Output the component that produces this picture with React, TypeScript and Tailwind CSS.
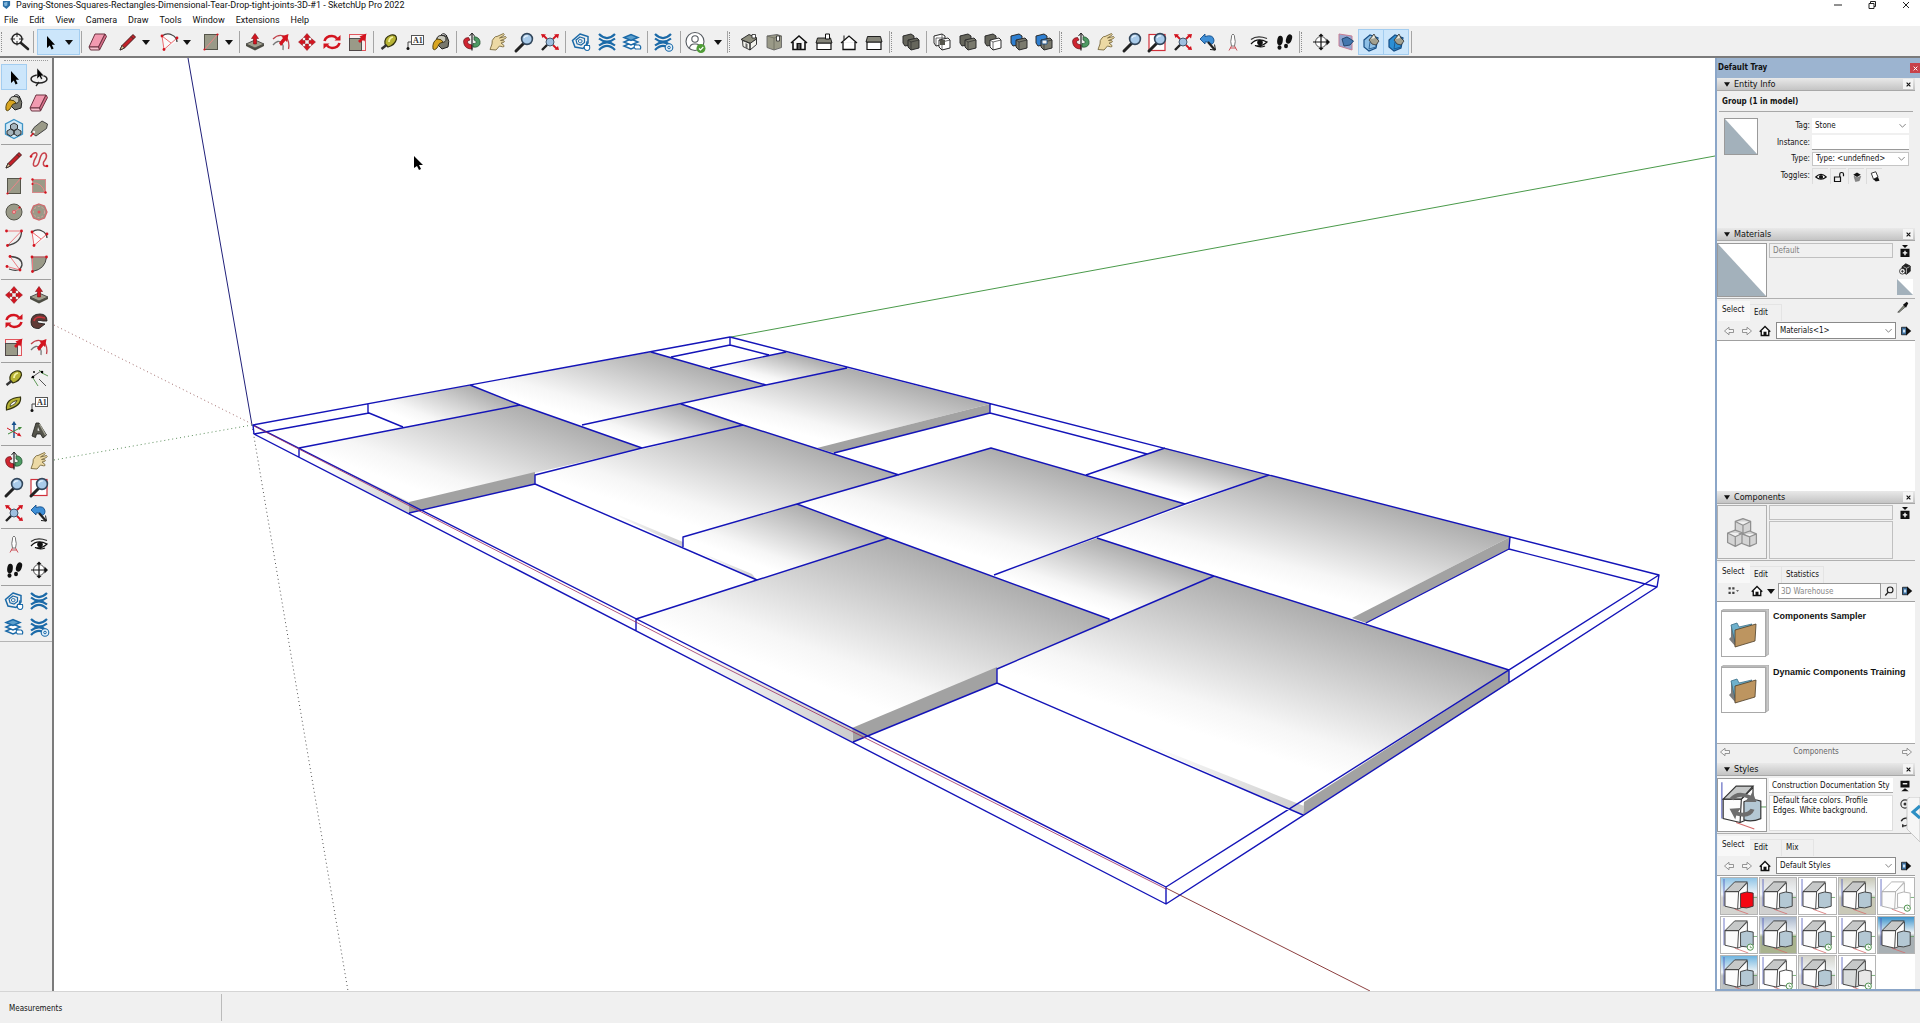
import type { ReactNode } from "react"
import clsx from "clsx"

const RED = "#d3141f"
const STONE = "#9a9a88"
const BLUE = "#1b6aa8"

const lens = (
    <>
        <path d="M11.5 13.5 L4 21" stroke="#222" strokeWidth="3" strokeLinecap="round" />
        <circle cx="15" cy="9" r="5.4" fill="#a9cbea" stroke="#33475c" strokeWidth="1.6" />
        <path d="M12 8 Q13 5.500 16 6" stroke="#e6f2fb" strokeWidth="1.2" fill="none" />
    </>
)

const wave = (
    <g stroke={BLUE} strokeWidth="2.2" fill="none">
        <path d="M4 4 Q12 12 20 4" />
        <path d="M4 8.500 Q12 15 20 8.500" />
        <path d="M4 15.500 Q12 9 20 15.500" />
        <path d="M4 20 Q12 12 20 20" />
    </g>
)

const pair = (back: string, front: string, stroke = "#2b2b2b") => (
    <g stroke={stroke} strokeWidth="1">
        <path d="M4 6 L12 4 L15 6 V14 L6 16 L4 13 Z" fill={back} />
        <path d="M9 10 L18 8 L20 10 V18 L12 20 L9 17 Z" fill={front} />
        <path d="M9 10 L12 12 V20 M12 12 L20 10" fill="none" strokeWidth="0.7" />
    </g>
)

const cutBox = (side: string) => (
    <>
        <path d="M5 10 L11 5 L19 8 L17 18 L10 21 L5 17 Z" fill={side} stroke="#174f86" strokeWidth="1.2" />
        <path d="M11 12 L17 9 L17 17 L10 19 Z" fill={side} stroke="#174f86" strokeWidth="0.8" />
        <path d="M10 10 L15 4 L17 8 L20 11 L17 15 L13 14 Z" fill="#a3a190" stroke="#333" strokeWidth="0.8" />
        <path d="M12 9 L15 5 L16 8 Z" fill="#ecebe0" />
    </>
)

const icons: Record<string, ReactNode> = {
    search: (
        <>
            <circle cx="9" cy="9" r="5" fill="#f4f4f4" stroke="#222" strokeWidth="1.4" />
            <path d="M9 2.500 V7 M9 11 V15.500 M2.500 9 H7 M11 9 H15.500" stroke="#222" />
            <path d="M13 13 L20 19" stroke="#222" strokeWidth="2.600" strokeLinecap="round" />
        </>
    ),
    select: <path d="M9 6 V18 L11.800 15.500 L13.600 19.500 L15.600 18.500 L13.800 14.700 H17 Z" fill="#000" />,
    lasso: (
        <>
            <ellipse cx="12" cy="14" rx="8" ry="4" fill="none" stroke="#222" strokeWidth="1.500" />
            <path d="M12 17 L9 21" stroke="#222" strokeWidth="1.300" />
            <path d="M10 3 V14 L12.500 11.500 L14 14.500 L15.500 13.800 L14.300 10.800 H17 Z" fill="#000" stroke="#eee" strokeWidth="0.500" />
        </>
    ),
    eraser: (
        <g stroke="#6b3240" strokeWidth="1" strokeLinejoin="round">
            <path d="M9 4 L19 4 L12.500 17 L3 17 Z" fill="#f29ab0" />
            <path d="M19 4 L20.500 6.500 L13.500 20 L12.500 17 Z" fill="#d86f8a" />
            <path d="M3 17 L12.500 17 L13.500 20 L4.500 20 Z" fill="#f7c0cd" />
        </g>
    ),
    pencil: (
        <>
            <path d="M4 20 L6 15.500 L17 4.500 L19.500 7 L8.500 18 Z" fill="#c22028" stroke="#3a1212" strokeWidth="0.900" />
            <path d="M4 20 L6 15.500 L8.500 18 Z" fill="#e9c99b" stroke="#222" strokeWidth="0.800" />
            <path d="M15 6.500 L17.500 9" stroke="#333" />
        </>
    ),
    freehand: (
        <>
            <path d="M4 8 C7 3 12 4 9 9 C6 14 5 19 9 18 C13 17 12 9 15 6 C19 3 21 8 18 12 C15 15 16 19 20 18" fill="none" stroke="#c8414a" strokeWidth="1.500" />
            <circle cx="4" cy="8.500" r="1.300" fill={RED} />
            <circle cx="20" cy="18" r="1.300" fill={RED} />
        </>
    ),
    rect: (
        <>
            <rect x="5.500" y="4.500" width="13" height="15" fill={STONE} stroke="#55554a" />
            <path d="M5 20 L19 4" stroke="#ec8487" strokeWidth="1" />
            <circle cx="5.500" cy="19.500" r="1.100" fill={RED} />
            <circle cx="18.500" cy="4.500" r="1.100" fill={RED} />
        </>
    ),
    rotrect: (
        <>
            <rect x="5.500" y="5.500" width="13" height="13" fill={STONE} stroke="#d9888a" />
            <path d="M5 9 Q15 8 18 19" stroke="#ec8487" fill="none" />
            <circle cx="5.500" cy="5.500" r="1.200" fill={RED} />
            <circle cx="5.500" cy="10" r="1.100" fill={RED} />
            <circle cx="18.500" cy="18.500" r="1.200" fill={RED} />
        </>
    ),
    circle: (
        <>
            <circle cx="12" cy="12" r="8" fill={STONE} stroke="#55554a" />
            <path d="M12 12 L18 8" stroke="#ec8487" />
            <circle cx="12" cy="12" r="1.700" fill="#f2a2a2" stroke="#d9585e" strokeWidth="0.800" />
            <circle cx="17.500" cy="7.500" r="1.100" fill={RED} />
        </>
    ),
    polygon: (
        <>
            <path d="M12 4 L17.500 6 L20 12 L17.500 18 L12 20 L6.500 18 L4 12 L6.500 6 Z" fill={STONE} stroke="#d0676b" strokeWidth="1.300" />
            <circle cx="12" cy="12" r="5.500" fill="none" stroke="#e2a0a0" strokeDasharray="2 2" />
            <circle cx="12" cy="12" r="1.500" fill="#e0555c" />
        </>
    ),
    arc: (
        <>
            <path d="M5 6 Q10 2 15 4.500 Q20 7 20 12 Q17 13 7 19.500 Z" fill="#fafafa" />
            <path d="M5 6 Q10 2.500 15 5 Q19.500 7 20 12" fill="none" stroke="#444" strokeWidth="1.300" />
            <path d="M5 6 L7 19.500 L20 8 M5 6 L14 13" stroke="#ec6a6f" fill="none" />
            <circle cx="5" cy="6" r="1.400" fill={RED} />
            <circle cx="20" cy="8" r="1.400" fill={RED} />
            <circle cx="7" cy="19.500" r="1.400" fill={RED} />
        </>
    ),
    arc2: (
        <>
            <path d="M4.500 5 H19.500 L5.500 19.500" stroke="#ec7a7f" fill="none" />
            <path d="M19.500 5 Q19.500 17 5.500 19.500" stroke="#444" strokeWidth="1.300" fill="none" />
            <circle cx="4.500" cy="5" r="1.400" fill={RED} />
            <circle cx="19.500" cy="5" r="1.400" fill={RED} />
            <circle cx="5.500" cy="19.500" r="1.400" fill={RED} />
        </>
    ),
    arc3: (
        <>
            <path d="M8 4.500 Q20 5 20 13 Q18 21 7 17" stroke="#444" strokeWidth="1.300" fill="none" />
            <path d="M8 4.500 L18 18 L5 14.500" stroke="#ec7a7f" fill="none" />
            <circle cx="8" cy="4.500" r="1.400" fill={RED} />
            <circle cx="18" cy="18" r="1.400" fill={RED} />
            <circle cx="5" cy="14.500" r="1.400" fill={RED} />
        </>
    ),
    pie: (
        <>
            <path d="M5 5 H19.500 Q18.500 17 5.500 19.500 Z" fill={STONE} stroke="#444" />
            <path d="M5 5 H19.500 M5.500 19.500 V5" stroke="#ec7a7f" />
            <circle cx="5" cy="5" r="1.400" fill={RED} />
            <circle cx="19.500" cy="5" r="1.400" fill={RED} />
            <circle cx="5.500" cy="19.500" r="1.400" fill={RED} />
        </>
    ),
    pushpull: (
        <>
            <path d="M3 14 L12 10 L21 14 L12 18 Z" fill="#a09f8d" stroke="#333" strokeWidth="0.800" />
            <path d="M3 14 V16 L12 20.500 L21 16 V14 L12 18 Z" fill="#4c4c42" />
            <path d="M12 3.500 L15.500 8.500 H13.500 V14 H10.500 V8.500 H8.500 Z" fill={RED} stroke="#7d0d14" strokeWidth="0.600" />
        </>
    ),
    offset: (
        <>
            <path d="M4 9 Q10 3 17 7 Q21 12 19.500 19" stroke="#c04048" strokeWidth="1.300" fill="none" />
            <path d="M4 15 Q9 9 13 13 Q15 16 14 20" stroke="#777" strokeWidth="1.300" fill="none" />
            <path d="M10 13 L14 8 L12.500 6.500 L19.500 4 L18 12 L16.500 10.500 L12 16 Z" fill={RED} />
        </>
    ),
    move: (
        <g fill={RED} stroke="#8c0f16" strokeWidth="0.500">
            <path d="M12 3.500 L15.500 7.500 H13.500 V10 H10.500 V7.500 H8.500 Z" />
            <path d="M12 20.500 L15.500 16.500 H13.500 V14 H10.500 V16.500 H8.500 Z" />
            <path d="M3.500 12 L7.500 8.500 V10.500 H10 V13.500 H7.500 V15.500 Z" />
            <path d="M20.500 12 L16.500 8.500 V10.500 H14 V13.500 H16.500 V15.500 Z" />
        </g>
    ),
    rotate: (
        <g fill="none" stroke={RED} strokeWidth="2.600">
            <path d="M4.500 11 Q6 6 12 6 Q15 6 17 8.500" />
            <path d="M19.500 13 Q18 18 12 18 Q9 18 7 15.500" />
            <path d="M14.500 10.500 H20.500 V5 Z M9.500 13.500 H3.500 V19 Z" fill={RED} stroke="none" />
        </g>
    ),
    followme: (
        <>
            <path d="M4 13 Q4 5 13 5 Q20 5 20 12 L16 12 Q9 10 11 14 L18 15 L12 19.500 Q4 20 4 13 Z" fill="#5f3a35" stroke="#222" strokeWidth="0.900" />
            <path d="M7 12 Q8 8 13 8 L18 9" stroke="#c8323a" strokeWidth="1.600" fill="none" />
        </>
    ),
    scale: (
        <>
            <rect x="3.500" y="4.500" width="16" height="16" fill="#f7eeee" stroke="#e0555c" />
            <rect x="3.500" y="8.500" width="12" height="12" fill={STONE} stroke="#444" strokeWidth="0.900" />
            <path d="M12 11 L15 8 L13.500 6.500 L20.500 3.500 L18.500 11.500 L17 10 L14 13 Z" fill={RED} />
        </>
    ),
    tape: (
        <>
            <path d="M8 14 Q7 7 14 5 Q19.500 4 19.500 9 Q18 15 11 17 Z" fill="#b7b335" stroke="#33330f" strokeWidth="1.200" />
            <path d="M12 12 Q12 8 16 7" stroke="#f4f2a2" strokeWidth="1.800" fill="none" />
            <path d="M9.500 15 L4.500 19" stroke="#333" strokeWidth="2.400" />
        </>
    ),
    dimension: (
        <>
            <path d="M4 12 L14 5 M12 13 L19 20" stroke="#555" strokeWidth="1" />
            <path d="M12 4 L16 8 M15 7 L21 10 M6 12 L11 20" stroke="#5f9a58" strokeWidth="1" />
            <circle cx="6" cy="11" r="1.300" />
            <circle cx="15" cy="6" r="1.300" />
            <path d="M6 5 h2 v2 h-2 z" fill="#444" />
        </>
    ),
    protractor: (
        <>
            <path d="M4.500 18 Q3 6 18.500 5 Q20 14 4.500 18 Z" fill="#b7b335" stroke="#33330f" strokeWidth="1.200" />
            <path d="M8 14.500 Q8 10 15 8.500 Q14 12.500 8 14.500 Z" fill="#f1f1f1" stroke="#33330f" strokeWidth="0.800" />
        </>
    ),
    label: (
        <>
            <rect x="8.500" y="5.500" width="12" height="9" fill="#fff" stroke="#555" />
            <text x="10" y="13" fontSize="8" fontFamily="Liberation Serif, serif" fontWeight="700" fill="#333">A1</text>
            <path d="M8 12 H5 V18" stroke="#444" fill="none" />
            <circle cx="5" cy="18.500" r="1.500" fill="#111" />
        </>
    ),
    axes: (
        <>
            <path d="M12 5 V20" stroke="#16508c" strokeWidth="1.400" />
            <path d="M5 10 L17 17" stroke={RED} strokeWidth="1" />
            <path d="M18 10 L6 16" stroke="#3f8a3a" strokeWidth="1" />
            <path d="M9.500 7 L12 3 L14.500 7 Z" fill="#16508c" />
            <path d="M19.500 18.500 L15 17.500 L17 14.500 Z" fill={RED} />
            <path d="M20 9 L16 9 L17.500 12 Z" fill="#3f8a3a" />
        </>
    ),
    text3d: (
        <>
            <path d="M5 18 L9 5 H12 L19.500 17 L16 20 L13.500 16 H9.500 L8.500 19.500 Z" fill="#55554c" stroke="#1d1d1a" strokeWidth="0.800" />
            <path d="M10.500 12.500 L11 9 L12.500 13 Z" fill="#f0f0f0" />
            <path d="M12.500 6 L18.500 17" stroke="#a5a596" strokeWidth="1.300" />
        </>
    ),
    paint: (
        <>
            <path d="M8 8 Q12 4 18 6.500 Q21 11 19 17 L13 19 L8 14 Z" fill="#77776c" stroke="#222" />
            <ellipse cx="12.500" cy="9" rx="4.500" ry="3.500" fill="#c9c9bd" stroke="#222" strokeWidth="0.900" />
            <path d="M4 19 Q3 12 8 9 Q13 9 14 12 Q10 12 8 18 Q5.500 21 4 19 Z" fill="#d9a520" stroke="#4b3b0a" strokeWidth="0.900" />
            <path d="M12 5 Q15 2 18 6" stroke="#222" fill="none" />
        </>
    ),
    component: (
        <>
            <path d="M12 2.500 L20.500 7 V17 L12 21.500 L3.500 17 V7 Z" fill="#d4e9f6" stroke="#3e94c6" strokeWidth="1.300" />
            <path d="M12 6 L15.500 8 V11.500 L12 13.500 L8.500 11.500 V8 Z M8.500 12 L12 14 V17 L8.500 19 L5 17 V14 Z M15.500 12 L19 14 V17 L15.500 19 L12 17 V14 Z" fill="#a5b4bc" stroke="#222" strokeWidth="0.900" />
        </>
    ),
    tag: (
        <>
            <path d="M4 15.500 L7 10.500 L15 4 L20.500 7 L19.500 11.500 L9 19 Z" fill={STONE} stroke="#444" />
            <circle cx="7" cy="15" r="1.200" fill="#f0f0f0" />
            <path d="M6.500 16 L3.500 19.500" stroke={RED} strokeWidth="1.400" />
        </>
    ),
    orbit: (
        <>
            <path d="M4 14 Q2 8 8.500 7.500 L10 10 Q6 11 8.500 14 L12 15 V19 Q5.500 19 4 14 Z" fill="#cf2530" stroke="#641015" strokeWidth="0.700" />
            <path d="M14 6.500 Q21 7.500 20 14 Q18 18 13 17 V13.500 Q17 14 16 11 L14 10 Z" fill="#4d9a63" stroke="#1c4a2a" strokeWidth="0.700" />
            <path d="M12 3.500 V20.500" stroke="#222" strokeWidth="1.200" />
            <path d="M9.500 6 L12 3 L14.500 6" fill="none" stroke="#222" />
        </>
    ),
    hand: (
        <path
            d="M4 19.500 L6 14 Q5.500 10 8 8 Q9.500 6 11 6.500 L17.500 3.500 Q19 4 17.500 5.500 L13.500 8 L19.500 6.500 Q21 7.200 19.500 8.500 L14.500 10.500 L18 10.800 Q19 12 17.500 12.500 L15 13 L18 15.500 Q18.500 17.200 16.500 16.800 L13.500 16 L10 20 Z"
            fill="#ecd9a4"
            stroke="#7b6b40"
            strokeWidth="0.900"
        />
    ),
    zoom: lens,
    zoomwin: (
        <>
            <rect x="4" y="4.500" width="16" height="16" fill="#fff" stroke="#d0303a" strokeWidth="1.200" />
            {lens}
        </>
    ),
    extents: (
        <>
            <path d="M10 14 L4 20" stroke="#222" strokeWidth="2.400" />
            <path d="M5 5 L9 9 M19 5 L15 9 M19 19 L15 15" stroke={RED} strokeWidth="1.800" />
            <path d="M3 4 L8 4.500 L4.500 8 Z M21 4 L20 8.500 L16 4.500 Z M21 20 L16.500 19.500 L20 16 Z" fill={RED} />
            <circle cx="12" cy="12" r="4" fill="#9fc0e0" stroke="#44566a" />
        </>
    ),
    prev: (
        <>
            <path d="M4 9 L9 4 V6.500 Q17 4 18 10 Q18 15 13.500 14 Q14 11.500 9 12 V14 Z" fill="#3f8fd6" stroke="#16508c" strokeWidth="0.900" />
            <path d="M12 12 L19 20" stroke="#222" strokeWidth="2.200" />
            <path d="M14 19.500 L19.500 20 L18.500 14.500" stroke="#222" fill="none" />
        </>
    ),
    position: (
        <>
            <path d="M12 4 Q14 5 13.600 8 Q15 11 13.500 16 H10.500 Q9 11 10.400 8 Q10 5 12 4 Z" fill="#fff" stroke="#777" />
            <path d="M10.500 16 L8 20.500 M13.500 16 L16 20.500 M9 18 H15" stroke="#cc525a" fill="none" />
        </>
    ),
    eye: (
        <>
            <path d="M4 14 Q10 7 20 12 Q15 17 8 15.500 Q13 18 18 16" fill="#fff" stroke="#111" strokeWidth="1.200" />
            <circle cx="13" cy="12.500" r="2.800" fill="#111" />
            <path d="M4 9.500 Q10 5 20 8.500" stroke="#333" strokeWidth="1.300" fill="none" />
        </>
    ),
    feet: (
        <g fill="#111">
            <ellipse cx="8" cy="10.500" rx="2.800" ry="4.800" transform="rotate(8 8 10.500)" />
            <ellipse cx="7.500" cy="17.500" rx="2" ry="2.300" />
            <ellipse cx="17" cy="9" rx="2.800" ry="4.800" transform="rotate(20 17 9)" />
            <ellipse cx="14" cy="16" rx="2" ry="2.300" />
        </g>
    ),
    section: (
        <>
            <circle cx="12" cy="12" r="5.500" fill="#fff" stroke="#555" strokeWidth="1" />
            <path d="M4 12 H20 M12 5 V19" stroke="#111" strokeWidth="1.200" />
            <path d="M17.500 8.500 L21 12 L17.500 15.500 Z M9.500 6 L12 3.500 L14.500 6 Z M9.500 18 L12 20.500 L14.500 18 Z" fill="#111" />
        </>
    ),
    warehouse: (
        <>
            <path d="M11 4 L19 6.500 V13 L14 18.500 L6 17 L3.500 10.500 Z" fill="none" stroke={BLUE} strokeWidth="1.500" />
            <path d="M11 7 L15.500 8.500 V12.500 L12 15 L8 13.800 L7 10 Z" fill="none" stroke={BLUE} strokeWidth="1.200" />
            <path d="M11 9.500 L13 10.200 V12 L11 13 L9.500 12 V10.200 Z" fill="none" stroke={BLUE} strokeWidth="0.900" />
            <path d="M18 11 V15.500 H20.500 Q21.500 20.500 18 20.500 Q14.500 20 15.500 15.500 L17 15.500 Z" fill="#fff" stroke={BLUE} strokeWidth="1.100" />
        </>
    ),
    ext: wave,
    layers: (
        <>
            <g fill="#fff" stroke={BLUE} strokeWidth="1.500">
                <path d="M4 16 L11 19 L18 16 L11 13 Z" />
                <path d="M4 12 L11 15 L18 12 L11 9 Z" />
                <path d="M4 7.500 L11 10.500 L18 7.500 L11 4.500 Z" fill="#5d9fcc" />
            </g>
            <path d="M15 15 H19 Q21.500 16 20.500 19 H15.500 Q13 17 15 15 Z" fill="#fff" stroke={BLUE} strokeWidth="1.100" />
        </>
    ),
    extmgr: (
        <>
            {wave}
            <circle cx="18" cy="17.500" r="3.800" fill="#e3f0fa" stroke={BLUE} strokeWidth="1.100" />
            <circle cx="18" cy="17.500" r="1.300" fill="none" stroke={BLUE} />
        </>
    ),
    account: (
        <>
            <circle cx="11" cy="11.500" r="9" fill="#fff" stroke="#555a60" strokeWidth="1.100" />
            <circle cx="11" cy="9" r="3.200" fill="none" stroke="#555a60" strokeWidth="1.100" />
            <path d="M5.500 18 Q6.500 13.500 11 14 Q15.500 13.500 16.500 18" fill="none" stroke="#555a60" strokeWidth="1.100" />
            <circle cx="17" cy="18.500" r="4.500" fill="#4f9c37" />
            <path d="M15 18.500 L16.500 20 L19.300 17" stroke="#fff" strokeWidth="1.100" fill="none" />
        </>
    ),
    iso: (
        <>
            <path d="M4 9.500 L12 4.500 L20 8 L14 13.500 Z" fill="#8f8f7f" stroke="#222" strokeWidth="0.900" />
            <path d="M5.500 10.500 L13 13.500 L13 20 L6 16.500 Z M13 13.500 L19.500 9 V14.500 L13 20 Z" fill="#f4f4ee" stroke="#222" strokeWidth="0.900" />
            <path d="M8.500 13 V17.500 L10.500 18.500 V14 Z" fill="#666" />
            <path d="M15 4.500 H18.500 V8 H15 Z" fill="#fff" stroke="#222" strokeWidth="0.800" />
        </>
    ),
    topview: (
        <>
            <path d="M5 6 L15 4.500 L19.500 6 V17.500 L12 20 L5 17.500 Z" fill={STONE} stroke="#666" strokeWidth="0.900" />
            <path d="M12 8 V20 M5 6 L12 8 L19.500 6" stroke="#6b6b5e" strokeWidth="0.800" fill="none" />
            <path d="M14.500 6 H17.500 V11 H14.500 Z" fill="#fff" stroke="#333" strokeWidth="0.900" />
        </>
    ),
    front: (
        <>
            <path d="M4 13 L12 6 L20 13 M6 12 V19.500 H18 V12" fill="#f8f8f8" stroke="#111" strokeWidth="1.600" />
            <path d="M9.500 13 H14.500 V19.500 H9.500 Z" fill="#111" />
            <path d="M12 14 V19" stroke="#999" />
        </>
    ),
    rightview: (
        <>
            <path d="M5 13 H19 V19.500 H5 Z" fill="#fff" stroke="#111" strokeWidth="1.200" />
            <path d="M5.500 8 H18.500 L20 13 H4 Z" fill="#85857a" stroke="#111" strokeWidth="0.900" />
            <path d="M13.500 4 H17.500 V9 H13.500 Z" fill="#fff" stroke="#111" strokeWidth="1" />
        </>
    ),
    back: (
        <>
            <path d="M4 13 L12 6 L20 13 M6 12 V19.500 H18 V12" fill="#fff" stroke="#111" strokeWidth="1.300" />
            <path d="M7 5.500 V10" stroke="#111" />
        </>
    ),
    leftview: (
        <>
            <path d="M5 12 H19 V19.500 H5 Z" fill="#fff" stroke="#111" strokeWidth="1.200" />
            <path d="M5.500 6.500 H18.500 L20 12 H4 Z" fill="#85857a" stroke="#111" strokeWidth="0.900" />
        </>
    ),
    outer: pair("#66665c", "#66665c"),
    intersect: (
        <>
            {pair("#fff", "#fff")}
            <path d="M10 10 H15 V15 H10 Z" fill="#55554c" />
            <path d="M6 8 H15 M6 8 V16 M12 4 V10" stroke="#333" strokeWidth="0.700" />
        </>
    ),
    union: pair("#66665c", "#7a7a6e"),
    subtract: pair("#66665c", "#fff"),
    trim: pair("#2f7fd0", "#7a7a6e"),
    split: (
        <>
            {pair("#2f7fd0", "#7a7a6e")}
            <path d="M10 10 H15 V14 H10 Z" fill="#f2f2f2" stroke="#16508c" strokeWidth="0.900" />
        </>
    ),
    plane: (
        <>
            <path d="M5 4 L18 6 V20 L5 16 Z" fill="#93a6d0" stroke="#c87d93" />
            <path d="M8 9 L13 7 L19.500 11 L16 15 L10 16 Z" fill="#4477ae" stroke="#24476f" />
        </>
    ),
    cut: cutBox("#8dbfe6"),
    fill: cutBox("#2c8fd4"),
}

const viewIcon: Record<string, ReactNode> = {
    back: <path d="M2 8 L8 3 V6 H14 V10 H8 V13 Z" fill="#f6f6f6" stroke="#777" />,
    forward: <path d="M14 8 L8 3 V6 H2 V10 H8 V13 Z" fill="#f6f6f6" stroke="#777" />,
    home: (
        <>
            <path d="M1 9 L8 2 L15 9 M3 8 V14 H13 V8" fill="#fff" stroke="#111" strokeWidth="1.800" />
            <path d="M6 9 H10 V14 H6 Z" fill="#111" />
        </>
    ),
    details: (
        <>
            <path d="M2 3 H9 V13 H2 Z" fill="#3c6e9c" stroke="#111" />
            <path d="M8 2 L15 8 L8 14 Z" fill="#111" />
            <path d="M4 6 H7 V10 H4 Z" fill="#cfe2f2" />
        </>
    ),
    pane: (
        <>
            <path d="M4 0 H12 L8 4 Z M2 5 H14 V16 H2 Z" fill="#111" />
            <path d="M8 7.500 V13.500 M5 10.500 H11" stroke="#fff" strokeWidth="1.800" />
        </>
    ),
    paneUp: (
        <>
            <path d="M2 1 H14 V10 H2 Z M8 11 L13 15 H3 Z" fill="#111" />
            <path d="M5 5 H11" stroke="#fff" strokeWidth="1.800" />
        </>
    ),
    create: (
        <>
            <path d="M4 5 L9 1 L15 4 V11 L10 15 L4 12 Z" fill="#222" stroke="#111" />
            <path d="M6 5 L10 7 L14 5 M10 7 V14" stroke="#ccc" fill="none" />
            <circle cx="4.500" cy="11" r="3.800" fill="#fff" stroke="#111" />
            <path d="M4.500 9 V13 M2.500 11 H6.500" stroke="#111" />
        </>
    ),
    dropper: (
        <>
            <path d="M1 15 L9 6 L11 8 L3 15 Z" fill="#8a8f80" stroke="#333" strokeWidth="0.800" />
            <path d="M8 5 L12 9 L15 3 L13 1 Z" fill="#111" />
        </>
    ),
    grid: <path d="M2 3 h3 v3 h-3 z M7 3 h3 v3 h-3 z M2 9 h3 v3 h-3 z M7 9 h3 v3 h-3 z M12 7 h4 l-2 2 z" fill="#444" />,
    eye: (
        <>
            <path d="M1 8 Q8 1 15 8 Q8 14 1 8 Z" fill="#fff" stroke="#111" strokeWidth="1.500" />
            <circle cx="8" cy="8" r="2.800" fill="#111" />
        </>
    ),
    lock: <path d="M2 8 H10 V14 H2 Z M9 8 V4 Q9 2 11.500 2 Q14 2 14 4 V7" fill="none" stroke="#111" strokeWidth="1.600" />,
    shadow: (
        <>
            <path d="M3 5 L8 2 L13 5 L8 8 Z" fill="#111" />
            <path d="M4 7 L8 9 L13 7 L11 13 L6 14 Z" fill="#8a8a8a" stroke="#555" strokeWidth="0.600" />
        </>
    ),
    cast: (
        <>
            <path d="M3 3 L9 1 L12 8 L6 11 Z" fill="#fff" stroke="#222" strokeWidth="1.200" />
            <path d="M6 11 L12 8 L14 13 L9 14 Z" fill="#111" />
        </>
    ),
    find: (
        <>
            <circle cx="9.500" cy="6.500" r="3.800" fill="none" stroke="#222" strokeWidth="1.500" />
            <path d="M7 9.500 L3 14" stroke="#222" strokeWidth="1.800" />
        </>
    ),
    target: (
        <>
            <circle cx="8" cy="8" r="5.500" fill="none" stroke="#333" strokeWidth="1.500" />
            <circle cx="8" cy="8" r="2" fill="#333" />
        </>
    ),
    refresh: <path d="M3 7 Q5 2 11 3 M11 1 V5 M13 9 Q11 14 5 13 M5 11 V15" fill="none" stroke="#222" strokeWidth="1.800" />,
}

function Tool({ name, active }: { name: string; active?: boolean }) {
    return (
        <button
            type="button"
            aria-label={name}
            className={clsx(
                "flex h-6 w-6 shrink-0 items-center justify-center",
                active && "bg-[#cce6fb] outline outline-[#a3cdf0]"
            )}
        >
            <svg viewBox="0 0 24 24" className="h-6 w-6">{icons[name]}</svg>
        </button>
    )
}

function Small({ name, className }: { name: string; className?: string }) {
    return (
        <button type="button" aria-label={name} className={clsx("flex h-4 w-4 shrink-0 items-center justify-center", className)}>
            <svg viewBox="0 0 16 16" className="h-3 w-3">{viewIcon[name]}</svg>
        </button>
    )
}

function Caret() {
    return (
        <button type="button" aria-label="More tools" className="flex h-6 w-3 shrink-0 items-center justify-center">
            <svg viewBox="0 0 10 6" className="h-[5px] w-[8px]"><path d="M0 0 H10 L5 6 Z" fill="#111" /></svg>
        </button>
    )
}

function Grip() {
    return <div className="my-1 ml-px mr-1 w-px shrink-0 border-l border-dotted border-[#8f8f8f]" />
}

type Segment = { width: string; tools: string[]; grip?: boolean }

const segments: Segment[] = [
    { width: "w-[134px]", tools: ["pushpull", "offset", "move", "rotate", "scale"] },
    { width: "w-[83px]", tools: ["tape", "label", "paint"] },
    { width: "w-[109px]", tools: ["orbit", "hand", "zoom", "extents"] },
    { width: "w-[82px]", tools: ["warehouse", "ext", "layers"] },
    { width: "w-[33px]", tools: ["extmgr"] },
    { width: "w-[47px]", tools: ["account", "caret"] },
    { width: "w-[156px]", tools: ["iso", "topview", "front", "rightview", "back", "leftview"], grip: true },
    { width: "w-[31px]", tools: ["outer"], grip: true },
    { width: "w-[133px]", tools: ["intersect", "union", "subtract", "trim", "split"] },
    { width: "w-[234px]", tools: ["orbit", "hand", "zoom", "zoomwin", "extents", "prev", "position", "eye", "feet"], grip: true },
    { width: "w-[106px]", tools: ["section", "plane", "cut", "fill"], grip: true },
]

function Toolbar() {
    return (
        <div className="flex h-[32px] shrink-0 items-stretch overflow-hidden border-b-2 border-[#7b7b7b] bg-[#f0f0f0] pt-[2px]">
            <Grip />
            <div className="my-[3px] flex w-[28px] shrink-0 items-center justify-center border-r border-[#a5a5a5]"><Tool name="search" /></div>
            <div className="my-[3px] flex w-[48px] shrink-0 items-center border-r border-[#a5a5a5] pl-1">
                <div className="flex w-[41px] items-center justify-between bg-[#cce6fb] pr-1 outline outline-[#a3cdf0]">
                    <Tool name="select" />
                    <Caret />
                </div>
            </div>
            <div className="my-[3px] flex w-[158px] shrink-0 items-center justify-between border-r border-[#a5a5a5] pl-1 pr-1">
                <Tool name="eraser" />
                <div className="flex items-center"><Tool name="pencil" /><Caret /></div>
                <div className="flex items-center"><Tool name="arc" /><Caret /></div>
                <div className="flex items-center"><Tool name="rect" /><Caret /></div>
            </div>
            {segments.map((segment, i) => (
                <div key={i} className="flex shrink-0">
                    {segment.grip && <Grip />}
                    <div className={clsx("my-[3px] flex shrink-0 items-center justify-between border-r border-[#a5a5a5] px-[3px]", segment.width)}>
                        {segment.tools.map((tool) =>
                            tool === "caret" ? <Caret key={tool} /> : <Tool key={tool} name={tool} active={tool === "cut" || tool === "fill"} />
                        )}
                    </div>
                </div>
            ))}
        </div>
    )
}

const palette = [
    ["select", "lasso", "paint", "eraser", "component", "tag"],
    ["pencil", "freehand", "rect", "rotrect", "circle", "polygon", "arc2", "arc", "arc3", "pie"],
    ["move", "pushpull", "rotate", "followme", "scale", "offset"],
    ["tape", "dimension", "protractor", "label", "axes", "text3d"],
    ["orbit", "hand", "zoom", "zoomwin", "extents", "prev"],
    ["position", "eye", "feet", "section"],
    ["warehouse", "ext", "layers", "extmgr"],
]

function Palette() {
    return (
        <aside className="w-[54px] shrink-0 border-r-2 border-[#7b7b7b] bg-[#f0f0f0]">
            <div className="mx-1 mt-[2px] mb-1 border-t border-dotted border-[#9a9a9a]" />
            <div className="border-b border-[#b5b5b5] pb-[2px]">
                {palette.map((group, i) => (
                    <div key={i} className={clsx("mx-px", i > 0 && "mt-[3px] border-t border-[#a0a0a0] pt-[3px]")}>
                        <div className="grid w-[50px] grid-cols-2 gap-y-[2px] justify-items-center">
                            {group.map((tool) => <Tool key={tool} name={tool} active={tool === "select"} />)}
                        </div>
                    </div>
                ))}
            </div>
        </aside>
    )
}

type Pt = [number, number]

// corners of every paver face: left, far, right, near
const stones: Pt[][] = [
    [[368, 404], [470, 385], [520, 405], [403, 427]],
    [[470, 385], [651, 352], [766, 385], [582, 425]],
    [[710, 368], [786, 352], [847, 368], [766, 385]],
    [[299, 448], [520, 405], [642, 448], [409, 502]],
    [[582, 425], [681, 404], [743, 425], [642, 448]],
    [[681, 404], [847, 368], [990, 404], [817, 448]],
    [[535, 475], [743, 425], [899, 475], [683, 537]],
    [[1086, 475], [1165, 448], [1269, 475], [1185, 504]],
    [[797, 504], [991, 448], [1185, 504], [994, 575]],
    [[683, 537], [797, 504], [888, 538], [757, 580]],
    [[1097, 538], [1269, 475], [1510, 537], [1352, 618]],
    [[994, 575], [1097, 538], [1214, 576], [1109, 621]],
    [[636, 619], [888, 538], [1109, 619], [1109, 621], [997, 669], [852, 728]],
    [[997, 669], [1215, 576], [1509, 670], [1304, 802]],
]

const sides = [
    "409,502 535,472 535,484 409,513",
    "817,448 990,404 990,413 834,453",
    "1352,618 1510,537 1509,549 1366,623",
    "852,728 997,667 997,683 853,742",
    "1304,802 1509,670 1509,683 1303,815",
]

const edges = [
    "M253 425 L730 337 L1659 575 L1166 887 Z",
    "M253 425 L254 434 L1166 904 L1657 587 L1659 575 M1166 887 V904",
    "M254 434 L369 413 L403 427 M368 404 V413",
    "M299 448 L520 405 M299 448 V457",
    "M470 385 L520 405 L642 448 L535 475 V484 L409 513",
    "M651 352 L766 385 L582 425",
    "M671 357 L730 345 L769 355 M730 337 V345",
    "M710 368 L786 352 M766 385 L847 368",
    "M681 404 L743 425 L899 475",
    "M642 448 L743 425",
    "M990 404 V413 L834 453 M990 413 L1147 454",
    "M535 484 L757 580 M683 547 V537 L797 504 L991 448 L1185 504",
    "M1086 475 L1165 448 M1269 475 L1185 504 L994 575",
    "M797 504 L888 538 L1109 619 V621",
    "M636 631 V619 L757 580 L888 538",
    "M1097 538 L1214 576 L1109 621 L997 669 V683 L1303 815",
    "M1214 576 L1509 670 V683",
    "M1510 537 L1509 549 L1366 623 M1509 549 L1657 587",
    "M997 683 L853 742",
]

function foot([l, t, r]: Pt[]): Pt {
    // foot of the perpendicular from the left corner on the far edge
    const dx = r[0] - t[0]
    const dy = r[1] - t[1]
    const k = ((l[0] - t[0]) * dx + (l[1] - t[1]) * dy) / (dx * dx + dy * dy)
    return [t[0] + k * dx, t[1] + k * dy]
}

function Viewport() {
    return (
        <main className="min-w-0 flex-1 bg-white">
            <svg viewBox="54 58 1661 933" preserveAspectRatio="xMinYMin slice" className="h-full w-full" role="img" aria-label="Paving stones model">
                <defs>
                    {stones.map((s, i) => {
                        const end = foot(s)
                        return (
                            <linearGradient key={i} id={`stone${i}`} gradientUnits="userSpaceOnUse" x1={s[0][0]} y1={s[0][1]} x2={end[0]} y2={end[1]}>
                                <stop offset="0" stopColor="#fff" />
                                <stop offset="0.200" stopColor="#f6f6f6" />
                                <stop offset="1" stopColor="#adadad" />
                            </linearGradient>
                        )
                    })}
                    <linearGradient id="lip" x1="0" y1="0" x2="1" y2="0">
                        <stop offset="0.200" stopColor="#fff" />
                        <stop offset="1" stopColor="#cdcdcd" />
                    </linearGradient>
                </defs>

                {/* Axes */}
                <path d="M188 58 L252 425" stroke="#20207a" fill="none" />
                <path d="M731 337 L1715 156" stroke="#4a9a4a" fill="none" />
                <path d="M1166 888 L1370 991" stroke="#8c4040" fill="none" />
                <path d="M252 425 L348 991" stroke="#555" strokeDasharray="1 3" fill="none" />
                <path d="M54 325 L252 424" stroke="#a06a6a" strokeDasharray="1 3" fill="none" />
                <path d="M54 460 L252 425" stroke="#5d8f5d" strokeDasharray="1 3" fill="none" />

                {/* Stones */}
                {stones.map((s, i) => <polygon key={i} points={s.join(" ")} fill={`url(#stone${i})`} />)}
                {sides.map((p) => <polygon key={p} points={p} fill="#a2a2a2" />)}
                <polygon points="299,448 409,502 409,513 300,457" fill="url(#lip)" />
                <polygon points="636,619 852,728 853,742 636,631" fill="url(#lip)" />
                <polygon points="590,503 683,542 683,547" fill="url(#lip)" />
                <polygon points="683,545 752,574 757,580" fill="url(#lip)" />
                <polygon points="1110,729 1304,806 1303,815" fill="url(#lip)" />

                <path d={edges.join(" ")} fill="none" stroke="#1414b8" strokeWidth="1.400" strokeLinejoin="round" />
                <path d="M254 426 L700 655 L1166 889" stroke="#9c2a5c" strokeWidth="0.800" fill="none" />

                {/* Pointer */}
                <path d="M414 156 V168 L417 166 L419 170 L421 169 L419 165 H423 Z" fill="#000" />
            </svg>
        </main>
    )
}

function Header({ title }: { title: string }) {
    return (
        <div className="flex h-[13px] shrink-0 items-center justify-between border-b border-[#a8a8a8] bg-linear-to-b from-[#e9e9e9] to-[#c4c4c4] pl-[7px] text-[9px] leading-[12px]">
            <h2 className="flex items-center gap-1">
                <svg viewBox="0 0 8 6" className="h-[5px] w-[6px]"><path d="M0 0 H8 L4 6 Z" fill="#111" /></svg>
                {title}
            </h2>
            <button type="button" aria-label={`Close ${title}`} className="mr-[2px] flex h-[10px] w-[10px] items-center justify-center bg-[#f4f4f4]">
                <svg viewBox="0 0 8 8" className="h-[5px] w-[5px]"><path d="M1 1 L7 7 M7 1 L1 7" stroke="#111" strokeWidth="1.800" /></svg>
            </button>
        </div>
    )
}

function Pick({ label, value, className }: { label: string; value: string; className?: string }) {
    return (
        <div className={clsx("relative bg-white", className)}>
            <select aria-label={label} className="h-full w-full appearance-none bg-transparent pl-[3px] pr-3 outline-none">
                <option>{value}</option>
            </select>
            <svg viewBox="0 0 8 5" className="pointer-events-none absolute right-[3px] top-1/2 h-[4px] w-[7px] -translate-y-1/2">
                <path d="M0 0 L4 4 L8 0" fill="none" stroke="#666" />
            </svg>
        </div>
    )
}

function Tabs({ names }: { names: string[] }) {
    return (
        <div className="flex h-[22px] items-end pl-px">
            {names.map((name, i) => (
                <button
                    key={name}
                    type="button"
                    className={clsx("px-1 text-left", i === 0 ? "h-[20px] w-[32px] bg-[#f8f8f8] pb-[2px]" : "h-[17px] min-w-[32px] border-r border-t border-[#e4e4e4]")}
                >
                    {name}
                </button>
            ))}
        </div>
    )
}

function Swatch({ className }: { className?: string }) {
    return (
        <svg viewBox="0 0 10 10" preserveAspectRatio="none" className={clsx("shrink-0", className)}>
            <path d="M0 0 H10 V10 Z" fill="#fff" />
            <path d="M0 0 V10 H10 Z" fill="#a3b1bb" />
        </svg>
    )
}

type Look = { sky?: string; ground?: string; body?: string; drum?: string; sketch?: boolean; badge?: boolean }

const looks: Look[] = [
    { sky: "#8fc4e6", ground: "#d4d4d0", drum: "#f40612" },
    { sky: "#d9d9d9", ground: "#d0d0d0" },
    {},
    { sky: "#c9c9b8", ground: "#c9c9b8" },
    { drum: "#fff", sketch: true, badge: true },
    { badge: true },
    { sky: "#a8b6cc", ground: "#a9b38f" },
    { badge: true },
    { badge: true },
    { sky: "#3d94cc", ground: "#a8b0b4" },
    { sky: "#6fb4e0", ground: "#bdc2c2" },
    { drum: "#fff", badge: true },
    { sky: "#d4d4cd", ground: "#dadada" },
    { body: "#d9dcdc", drum: "#e8e8e8", badge: true },
]

function Blocks({ look, id }: { look: Look; id: string }) {
    const line = look.sketch ? "#aaa" : "#333"
    return (
        <svg viewBox="0 0 37 37" className="h-full w-full">
            <defs>
                <linearGradient id={id} x1="0" y1="0" x2="0" y2="1">
                    <stop offset="0" stopColor={look.sky ?? "#fff"} />
                    <stop offset="0.450" stopColor={look.sky ? "#f2f6f8" : "#fff"} />
                    <stop offset="0.550" stopColor={look.ground ?? "#fff"} />
                    <stop offset="1" stopColor={look.ground ?? "#fff"} />
                </linearGradient>
            </defs>
            <rect width="37" height="37" fill={`url(#${id})`} />
            <path d="M3 1 V29" stroke="#4a54b8" strokeWidth="0.800" />
            <path d="M14 32 L28 37" stroke="#d46a6a" strokeWidth="0.800" />
            <path d="M33 20 H37" stroke="#5da05d" strokeWidth="0.800" />
            <path d="M4 14 L18 14 L27 5 V28 L17 32 L4 29 Z" fill={look.body ?? "#fcfcfc"} stroke={line} strokeWidth="0.900" />
            <path d="M4 14 L14 4 H27 L18 14 Z" fill={look.sketch ? "#fff" : "#c6c8c8"} stroke={line} strokeWidth="0.900" />
            <path d="M18 14 L17 32" stroke={line} strokeWidth="0.900" />
            <path d="M20 16 Q26 13 33 15.500 V29 Q26 32 20 30 Z" fill={look.drum ?? "#b4c8d4"} stroke={line} strokeWidth="0.900" />
            {look.badge && <circle cx="30" cy="31" r="3.200" fill="#fff" stroke="#4a8f4a" />}
            {look.badge && <path d="M30 29.500 V31.500 H32" stroke="#4a8f4a" strokeWidth="0.700" fill="none" />}
        </svg>
    )
}

function Folder({ name }: { name: string }) {
    return (
        <li className="flex h-[56px] items-start gap-1">
            <svg viewBox="0 0 48 48" className="h-12 w-12 shrink-0">
                <path d="M0 2 L3 0 H48 V45 L45 47 V2 Z" fill="#c9c9c9" stroke="#999" strokeWidth="0.600" />
                <rect x="0.500" y="2.500" width="44" height="45" fill="#fff" stroke="#a9a9a9" />
                <path d="M8 30 L14 37 L14 20 L10 17 V28 Z" fill="#7d7d7d" />
                <path d="M10 16 L16 14 L18 18 L31 15 L14 33 Z" fill="#6fb1cc" stroke="#3a6f88" strokeWidth="0.800" />
                <path d="M14 21 L35 15 L34 32 L14 38 Z" fill="#bd9560" stroke="#4b3d28" strokeWidth="0.800" />
            </svg>
            <a href="#" className="whitespace-nowrap font-['Liberation_Sans',sans-serif] text-[9px] font-bold leading-[14px]">{name}</a>
        </li>
    )
}

function NavRow({ label, value }: { label: string; value: string }) {
    return (
        <div className="flex h-[20px] items-center border-b border-[#a0a0a0] pl-1">
            <Small name="back" className="mr-[2px]" />
            <Small name="forward" />
            <Small name="home" className="ml-[2px]" />
            <Pick label={label} value={value} className="ml-[3px] h-[17px] w-[120px] border border-[#8a8a8a]" />
            <Small name="details" className="ml-[2px]" />
        </div>
    )
}

const toggles = ["eye", "lock", "shadow", "cast"]

function Tray() {
    return (
        <aside className="flex w-[205px] shrink-0 flex-col border-b-2 border-l-2 border-[#8ba6c8] bg-[#f0f0f0] font-['DejaVu_Sans_Condensed','DejaVu_Sans',sans-serif] text-[8px] leading-[12px]">
            <div className="flex h-5 shrink-0 items-center justify-between bg-[#9cb4d0] pl-px text-[8px] font-bold">
                <h1>Default Tray</h1>
                <button type="button" aria-label="Close tray" className="flex h-[10px] w-[10px] items-center justify-center bg-[#c8424a]">
                    <svg viewBox="0 0 8 8" className="h-[5px] w-[5px]"><path d="M1 1 L7 7 M7 1 L1 7" stroke="#fff" strokeWidth="1.600" /></svg>
                </button>
            </div>

            <div className="mr-[5px] flex min-h-0 flex-1 flex-col">
                <section className="h-[150px] shrink-0">
                    <Header title="Entity Info" />
                    <p className="mx-[2px] h-[21px] border-b border-[#a8a8a8] pl-[3px] pt-[5px] text-[8px] font-bold">Group (1 in model)</p>
                    <div className="flex pl-[7px] pt-[6px]">
                        <Swatch className="h-[37px] w-[34px] border border-[#9a9a9a]" />
                        <div className="ml-[14px] grid w-[137px] grid-cols-[38px_1fr] items-center gap-x-[2px] gap-y-[2px]">
                            <span className="text-right">Tag:</span>
                            <Pick label="Tag" value="Stone" className="h-[15px]" />
                            <label htmlFor="instance" className="text-right">Instance:</label>
                            <input id="instance" className="h-[15px] w-full border-b border-[#999] bg-white outline-none" />
                            <span className="text-right">Type:</span>
                            <Pick label="Type" value="Type: <undefined>" className="h-[14px] border border-[#c5c5c5]" />
                            <span className="text-right">Toggles:</span>
                            <div className="flex h-4 gap-[2px]">
                                {toggles.map((name) => <Small key={name} name={name} className="border-l border-t border-[#dcdcdc]" />)}
                            </div>
                        </div>
                    </div>
                </section>

                <section className="flex min-h-0 flex-1 flex-col">
                    <Header title="Materials" />
                    <div className="flex h-[58px] shrink-0 border-b border-[#b0b0b0] pt-[2px]">
                        <Swatch className="h-[54px] w-[50px] border border-[#9a9a9a]" />
                        <input aria-label="Material name" defaultValue="Default" disabled className="ml-[2px] h-[15px] w-[124px] border border-[#c0c0c0] pl-[3px] text-[#808080]" />
                        <div className="ml-1 flex flex-col gap-[2px]">
                            <Small name="pane" />
                            <Small name="create" />
                            <Swatch className="h-4 w-4" />
                        </div>
                    </div>
                    <div className="flex shrink-0 items-start justify-between pr-1">
                        <Tabs names={["Select", "Edit"]} />
                        <Small name="dropper" />
                    </div>
                    <NavRow label="Material library" value="Materials<1>" />
                    <div className="min-h-0 flex-1 bg-white" />
                </section>

                <section className="shrink-0">
                    <Header title="Components" />
                    <div className="flex h-[57px] border-b border-[#b0b0b0] pt-px">
                        <svg viewBox="0 0 50 54" className="h-[54px] w-[50px] shrink-0 border border-[#b0b0b0]">
                            <g fill="#d4d4d4" stroke="#909090" strokeWidth="1.300" strokeLinejoin="round">
                                <path d="M18 16 L26 13 L34 16 V26 L26 30 L18 26 Z M18 16 L26 20 L34 16 M26 20 V30" />
                                <path d="M10 28 L18 25 L26 28 V38 L18 42 L10 38 Z M10 28 L18 32 L26 28 M18 32 V42" />
                                <path d="M25 29 L33 26 L40 29 V39 L33 42 L25 39 Z M25 29 L33 32 L40 29 M33 32 V42" />
                            </g>
                        </svg>
                        <div className="ml-[2px] flex w-[124px] flex-col gap-px">
                            <input aria-label="Component name" disabled className="h-[15px] w-full border border-[#c0c0c0]" />
                            <textarea aria-label="Component description" disabled className="h-[38px] w-full resize-none border border-[#c0c0c0]" />
                        </div>
                        <Small name="pane" className="ml-1" />
                    </div>
                    <Tabs names={["Select", "Edit", "Statistics"]} />
                    <div className="flex h-[19px] items-start border-b border-[#a0a0a0] pl-2">
                        <Small name="grid" />
                        <Small name="home" className="ml-2" />
                        <div className="flex h-4 items-center"><Caret /></div>
                        <input aria-label="Search 3D Warehouse" placeholder="3D Warehouse" className="ml-px h-4 w-[110px] border border-[#999] bg-white pl-[2px] outline-none placeholder:text-[#888]" />
                        <Small name="find" className="border-y border-r border-[#bbb]" />
                        <Small name="details" className="ml-[2px]" />
                    </div>
                    <ul className="h-[141px] bg-white pl-1 pt-[7px]">
                        <Folder name="Components Sampler" />
                        <Folder name="Dynamic Components Training" />
                    </ul>
                    <div className="flex h-[20px] items-start justify-between border-t border-[#a8a8a8] leading-[16px] text-[#666]">
                        <Small name="back" />
                        Components
                        <Small name="forward" />
                    </div>
                </section>

                <section className="relative shrink-0">
                    <Header title="Styles" />
                    <div className="flex h-[58px] border-b border-[#b0b0b0] pt-[2px]">
                        <div className="relative h-[54px] w-[50px] shrink-0 border border-[#9a9a9a] bg-white">
                            <Blocks look={{}} id="current" />
                            <svg viewBox="0 0 50 54" className="absolute inset-0 h-full w-full">
                                <path d="M12 20 Q20 10 34 17 L36 13 L40 24 L28 24 L31 20 Q22 16 16 22 Z M38 32 Q34 42 19 38 L18 42 L12 31 L24 30 L21 34 Q29 37 34 31 Z" fill="#6d6d6d" />
                            </svg>
                        </div>
                        <div className="ml-[2px] flex w-[124px] flex-col gap-[2px]">
                            <input aria-label="Style name" defaultValue="Construction Documentation Sty" className="h-[15px] w-full border-b border-[#aaa] bg-white pl-[3px] outline-none" />
                            <textarea
                                aria-label="Style description"
                                defaultValue="Default face colors. Profile Edges. White background."
                                className="h-[36px] w-full resize-none overflow-hidden border border-[#ddd] bg-white pl-[3px] leading-[10px] outline-none"
                            />
                        </div>
                        <div className="ml-1 flex flex-col gap-[2px]">
                            <Small name="paneUp" />
                            <Small name="target" />
                            <Small name="refresh" />
                        </div>
                    </div>
                    <Tabs names={["Select", "Edit", "Mix"]} />
                    <NavRow label="Style library" value="Default Styles" />
                    <div className="grid h-[113px] grid-cols-5 gap-px overflow-hidden bg-white pl-[3px] pt-px">
                        {looks.map((look, i) => (
                            <button key={i} type="button" aria-label={`Style ${i + 1}`} className="h-[38px] border border-[#b5b5b5]">
                                <Blocks look={look} id={`look${i}`} />
                            </button>
                        ))}
                    </div>
                    {/* side handle lying over the tray edge */}
                    <svg viewBox="0 0 14 46" className="absolute -right-[5px] top-[34px] h-[46px] w-[14px]">
                        <path d="M14 0 H4 Q1 1 1 4 V32 L14 45 Z" fill="#f6f6f6" stroke="#c8c8c8" />
                        <path d="M14 9 L7 15 L14 21" fill="none" stroke="#2d8fc4" strokeWidth="3" />
                    </svg>
                </section>
            </div>
        </aside>
    )
}

const menus = ["File", "Edit", "View", "Camera", "Draw", "Tools", "Window", "Extensions", "Help"]

export default function App() {
    return (
        <div className="flex h-screen flex-col overflow-hidden bg-[#f0f0f0] font-['Roboto','Open_Sans',sans-serif] text-[9px] text-[#111]">
            <header className="shrink-0 bg-white">
                <div className="flex h-[11px] items-center justify-between pb-[2px]">
                    <div className="flex items-center gap-[5px] pl-[2px] leading-[10px]">
                        <svg viewBox="0 0 10 10" className="h-[9px] w-[9px]">
                            <path d="M1 1 H9 V6 L5 10 L1 7 Z" fill="#2a6ea5" />
                            <path d="M2 3 L6 2 V6 L3 7 Z" fill="#7fb4da" />
                        </svg>
                        Paving-Stones-Squares-Rectangles-Dimensional-Tear-Drop-tight-joints-3D-#1 - SketchUp Pro 2022
                    </div>
                    <div className="flex gap-[26px] pr-[10px]">
                        <button type="button" aria-label="Minimize"><svg viewBox="0 0 8 8" className="h-2 w-2"><path d="M0 4 H8" stroke="#222" /></svg></button>
                        <button type="button" aria-label="Restore"><svg viewBox="0 0 8 8" className="h-2 w-2"><path d="M1 2.500 H6 V7.500 H1 Z M2.500 2 V0.500 H7.500 V5.500 H6" fill="none" stroke="#222" /></svg></button>
                        <button type="button" aria-label="Close"><svg viewBox="0 0 8 8" className="h-2 w-2"><path d="M1 1 L7 7 M7 1 L1 7" stroke="#222" /></svg></button>
                    </div>
                </div>
                <nav className="flex h-[15px] items-center gap-[11px] pl-1 pt-[3px] leading-[12px]">
                    {menus.map((menu) => <button key={menu} type="button">{menu}</button>)}
                </nav>
            </header>

            <Toolbar />

            <div className="flex min-h-0 flex-1">
                <Palette />
                <Viewport />
                <Tray />
            </div>

            <footer className="flex h-8 shrink-0 border-t border-[#d5d5d5]">
                <label htmlFor="measurements" className="flex w-[112px] items-center pl-[9px] pt-[3px] font-['DejaVu_Sans_Condensed','DejaVu_Sans',sans-serif] text-[8px]">Measurements</label>
                <input id="measurements" className="my-[2px] w-[110px] border-r border-[#bbb] bg-transparent outline-none" />
            </footer>
        </div>
    )
}
